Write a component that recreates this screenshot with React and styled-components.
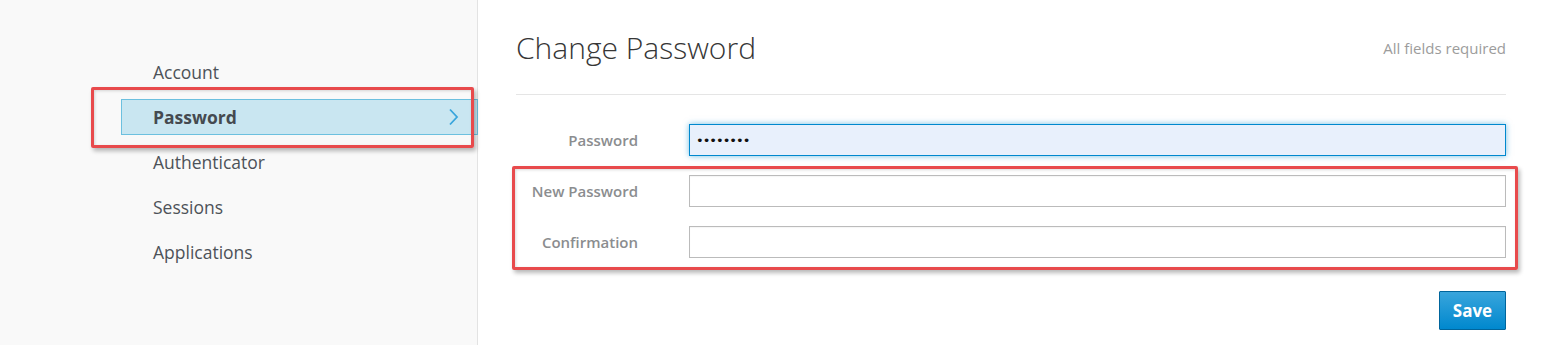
import React from "react";
import styled, { createGlobalStyle } from "styled-components";

const GlobalStyle = createGlobalStyle`
  html, body {
    margin: 0;
    padding: 0;
    background: #fff;
    font-family: "Open Sans", "Noto Sans", sans-serif;
  }
  * { box-sizing: border-box; }
`;

const Page = styled.div`
  display: flex;
  width: 1545px;
  height: 345px;
  overflow: hidden;
`;

const Sidebar = styled.nav`
  width: 478px;
  flex: none;
  background: #f9f9f9;
  border-right: 1px solid #e3e3e3;
  padding-top: 54px;
`;

const NavList = styled.ul`
  list-style: none;
  margin: 0;
  padding: 0;
  display: flex;
  flex-direction: column;
  gap: 9px;
`;

const NavItem = styled.li`
  position: relative;
  height: 36px;
  margin-left: 121px;
  margin-right: -1px;
  padding-left: 31px;
  display: flex;
  align-items: center;
  justify-content: space-between;
  font-size: 17.5px;
  color: ${(p) => (p.$active ? "#454a50" : "#4d5258")};
  font-weight: ${(p) => (p.$active ? 700 : 400)};
  background: ${(p) => (p.$active ? "#c9e6f1" : "transparent")};
  border: 1px solid ${(p) => (p.$active ? "#6cc0df" : "transparent")};
`;

const Chevron = styled.svg`
  width: 11px;
  height: 18px;
  margin-right: 18px;
`;

const Callout = styled.div`
  position: absolute;
  pointer-events: none;
  border: 3px solid #e84a4c;
  border-radius: 2px;
  box-shadow: 2px 3px 4px rgba(0, 0, 0, 0.28),
    inset 1px 1px 3px rgba(0, 0, 0, 0.15);
  top: ${(p) => p.$top}px;
  bottom: ${(p) => p.$bottom}px;
  left: ${(p) => p.$left}px;
  right: ${(p) => p.$right}px;
`;

const Main = styled.main`
  flex: 1;
  padding: 24px 39px 0 38px;
`;

const Header = styled.div`
  display: flex;
  align-items: center;
  justify-content: space-between;
  padding-bottom: 22px;
  border-bottom: 1px solid #e5e5e5;
`;

const Title = styled.h1`
  margin: 0;
  font-size: 30px;
  line-height: 48px;
  font-weight: 300;
  color: #363636;
`;

const Note = styled.span`
  font-size: 15px;
  color: #9c9c9c;
`;

const Form = styled.form`
  margin-top: 29px;
  display: flex;
  flex-direction: column;
  gap: 19px;
`;

const Group = styled.div`
  position: relative;
  display: flex;
  flex-direction: column;
  gap: 19px;
`;

const Row = styled.div`
  display: flex;
  align-items: center;
`;

const Label = styled.label`
  width: 122px;
  flex: none;
  text-align: right;
  font-size: 15px;
  font-weight: 600;
  color: #8b8d8f;
  margin-right: 51px;
`;

const Input = styled.input`
  flex: 1;
  height: 32px;
  padding: 0 6px;
  font-family: "DejaVu Sans", sans-serif;
  font-size: 13px;
  letter-spacing: -1px;
  color: #111;
  caret-color: #111;
  outline: none;
  border: 1px solid ${(p) => (p.$focus ? "#0088ce" : "#bbbbbb")};
  background: ${(p) => (p.$focus ? "#e8f0fc" : "#fff")};
  box-shadow: ${(p) =>
    p.$focus ? "0 0 6px rgba(0, 136, 206, 0.55)" : "inset 0 1px 1px rgba(0,0,0,0.04)"};
`;

const Actions = styled.div`
  display: flex;
  justify-content: flex-end;
  margin-top: 14px;
`;

const SaveButton = styled.button`
  width: 67px;
  height: 39px;
  font-family: inherit;
  font-size: 17px;
  font-weight: 700;
  color: #fff;
  border: 1px solid #00659c;
  border-radius: 1px;
  background: linear-gradient(to bottom, #39a5dc, #0088ce);
`;

const navItems = ["Account", "Password", "Authenticator", "Sessions", "Applications"];

export default function App() {
  return (
    <Page>
      <GlobalStyle />
      <Sidebar>
        <NavList>
          {navItems.map((item) => {
            const active = item === "Password";
            return (
              <NavItem key={item} $active={active}>
                {item}
                {active && (
                  <>
                    <Chevron viewBox="0 0 11 18">
                      <path d="M2 1.5 L9 9 L2 16.5" fill="none" stroke="#39a5dc" strokeWidth="1.8" />
                    </Chevron>
                    <Callout $top={-13} $bottom={-14} $left={-31} $right={3} />
                  </>
                )}
              </NavItem>
            );
          })}
        </NavList>
      </Sidebar>
      <Main>
        <Header>
          <Title>Change Password</Title>
          <Note>All fields required</Note>
        </Header>
        <Form onSubmit={(e) => e.preventDefault()}>
          <Row>
            <Label>Password</Label>
            <Input type="password" defaultValue="12345678" $focus autoFocus />
          </Row>
          <Group>
            <Row>
              <Label>New Password</Label>
              <Input type="password" />
            </Row>
            <Row>
              <Label>Confirmation</Label>
              <Input type="password" />
            </Row>
            <Callout $top={-9} $bottom={-12} $left={-4} $right={-12} />
          </Group>
          <Actions>
            <SaveButton type="submit">Save</SaveButton>
          </Actions>
        </Form>
      </Main>
    </Page>
  );
}
